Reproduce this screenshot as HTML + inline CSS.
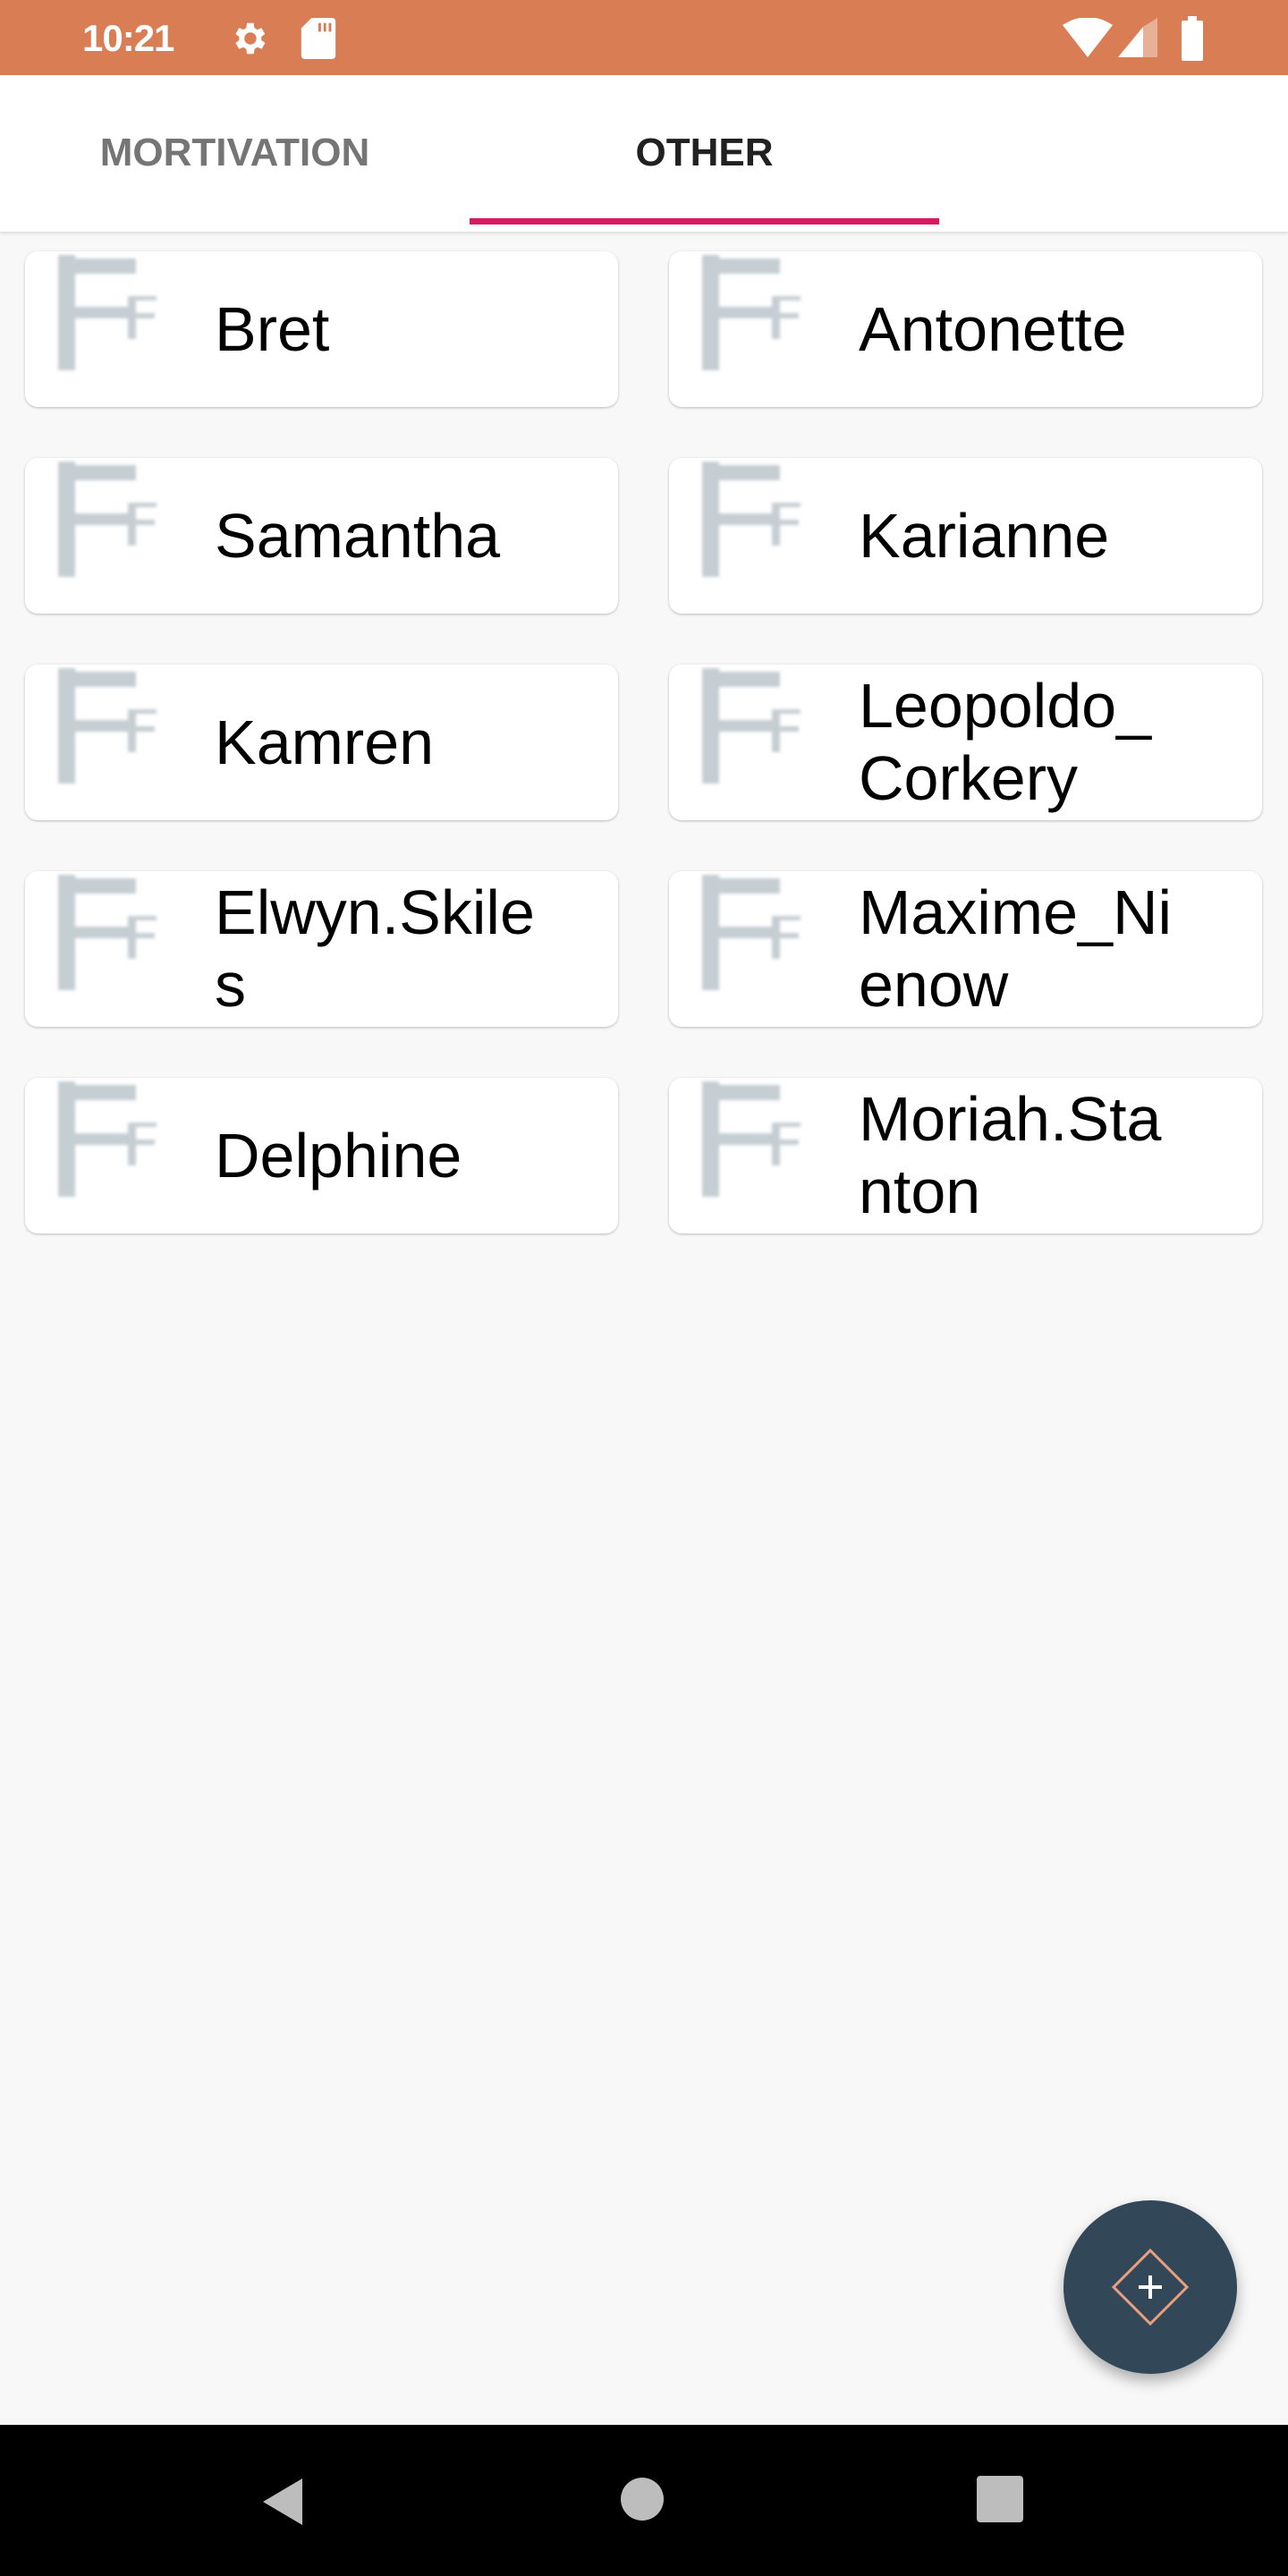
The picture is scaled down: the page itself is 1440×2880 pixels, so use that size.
<!DOCTYPE html>
<html><head><meta charset="utf-8"><style>
*{margin:0;padding:0;box-sizing:border-box}
body{width:1440px;height:2880px;background:#f8f8f8;position:relative;overflow:hidden;font-family:"Liberation Sans",Roboto,sans-serif}
.status{position:absolute;left:0;top:0;width:1440px;height:84px;background:#d97d55;color:#fff}
.time{position:absolute;left:92px;top:19px;font-size:42px;font-weight:bold;letter-spacing:-1px}
.tabs{position:absolute;left:0;top:84px;width:1440px;height:175px;background:#fff;box-shadow:0 2px 4px rgba(0,0,0,.12)}
.tab{position:absolute;top:62px;width:525px;text-align:center;font-size:44px;font-weight:bold}
.ind{position:absolute;left:525px;top:160px;width:525px;height:7px;background:#d81b60}
.card{position:absolute;width:663px;height:174px;background:#fff;border-radius:14px;box-shadow:0 1px 3px rgba(0,0,0,.18),0 1px 2px rgba(0,0,0,.08)}
.card svg{position:absolute;left:0;top:0}
.name{position:absolute;left:212px;top:0;height:174px;width:365px;display:flex;align-items:center;font-size:70px;line-height:81px;color:#000;word-break:break-all}
.fab{position:absolute;left:1189px;top:2460px;width:194px;height:194px;border-radius:50%;background:#324858;box-shadow:0 8px 16px rgba(0,0,0,.3)}
.nav{position:absolute;left:0;top:2711px;width:1440px;height:169px;background:#000}
</style></head><body>
<svg width="0" height="0" style="position:absolute"><defs><filter id="b"><feGaussianBlur stdDeviation="1.8"/></filter><g id="f" fill="#c5ced3" filter="url(#b)"><rect x="37" y="4" width="19" height="129"/><rect x="37" y="8" width="87" height="17"/><rect x="37" y="62" width="78" height="13"/><rect x="115" y="50" width="9" height="48"/><rect x="115" y="50" width="32" height="5"/><rect x="115" y="69" width="30" height="6"/></g></defs></svg>
<div class="status">
<div class="time">10:21</div>
<svg style="position:absolute;left:255px;top:20px" width="46" height="46" viewBox="0 0 24 24"><path fill="#fff" d="M19.4 13a7.5 7.5 0 0 0 0-2l2.1-1.6-2-3.5-2.5 1a7 7 0 0 0-1.7-1L15 3h-4l-.4 2.9a7 7 0 0 0-1.7 1l-2.5-1-2 3.5L6.5 11a7.5 7.5 0 0 0 0 2l-2.1 1.6 2 3.5 2.5-1a7 7 0 0 0 1.7 1L11 21h4l.4-2.9a7 7 0 0 0 1.7-1l2.5 1 2-3.5zM13 15.5a3.5 3.5 0 1 1 0-7 3.5 3.5 0 0 1 0 7z"/></svg>
<svg style="position:absolute;left:336px;top:20px" width="40" height="46" viewBox="0 0 20 24"><path fill="#fff" d="M6 0h12a2 2 0 0 1 2 2v20a2 2 0 0 1-2 2H2a2 2 0 0 1-2-2V6zM10 3v5h1.5V3zM13 3v5h1.5V3zM16 3v5h1.5V3z"/></svg>
<svg style="position:absolute;left:1188px;top:20px" width="56" height="44" viewBox="0 0 56 44"><path fill="#fff" d="M28 44L0 8Q28-10 56 8z"/></svg>
<svg style="position:absolute;left:1250px;top:20px" width="44" height="44" viewBox="0 0 44 44"><path fill="#fff" d="M0 44L28 10V44z"/><path fill="#e8b096" d="M28 10L44 0V44H28z"/></svg>
<svg style="position:absolute;left:1320px;top:18px" width="28" height="50" viewBox="0 0 28 50"><rect x="8" y="0" width="10" height="6" fill="#fff"/><rect x="1" y="5" width="24" height="45" rx="2" fill="#fff"/></svg>
</div>
<div class="tabs">
<div class="tab" style="left:0;color:#757575">MORTIVATION</div>
<div class="tab" style="left:525px;color:#212121">OTHER</div>
<div class="ind"></div>
</div>

<div class="card" style="left:28px;top:281px"><svg width="160" height="174"><use href="#f"/></svg><div class="name">Bret</div></div>
<div class="card" style="left:748px;top:281px"><svg width="160" height="174"><use href="#f"/></svg><div class="name">Antonette</div></div>
<div class="card" style="left:28px;top:512px"><svg width="160" height="174"><use href="#f"/></svg><div class="name">Samantha</div></div>
<div class="card" style="left:748px;top:512px"><svg width="160" height="174"><use href="#f"/></svg><div class="name">Karianne</div></div>
<div class="card" style="left:28px;top:743px"><svg width="160" height="174"><use href="#f"/></svg><div class="name">Kamren</div></div>
<div class="card" style="left:748px;top:743px"><svg width="160" height="174"><use href="#f"/></svg><div class="name">Leopoldo_Corkery</div></div>
<div class="card" style="left:28px;top:974px"><svg width="160" height="174"><use href="#f"/></svg><div class="name">Elwyn.Skiles</div></div>
<div class="card" style="left:748px;top:974px"><svg width="160" height="174"><use href="#f"/></svg><div class="name">Maxime_Nienow</div></div>
<div class="card" style="left:28px;top:1205px"><svg width="160" height="174"><use href="#f"/></svg><div class="name">Delphine</div></div>
<div class="card" style="left:748px;top:1205px"><svg width="160" height="174"><use href="#f"/></svg><div class="name">Moriah.Stanton</div></div>

<div class="fab"><svg width="194" height="194" viewBox="0 0 194 194"><path d="M97 56L138 97 97 138 56 97z" fill="none" stroke="#e8a07f" stroke-width="3"/><path d="M97 84v26M84 97h26" stroke="#fff" stroke-width="4"/></svg></div>

<div class="nav">
<svg style="position:absolute;left:290px;top:58px" width="52" height="56" viewBox="0 0 52 56"><path d="M48 2L4 28 48 54z" fill="#bdbdbd"/></svg>
<div style="position:absolute;left:694px;top:59px;width:48px;height:48px;border-radius:50%;background:#bdbdbd"></div>
<div style="position:absolute;left:1092px;top:57px;width:52px;height:52px;border-radius:4px;background:#bdbdbd"></div>
</div>
</body></html>
